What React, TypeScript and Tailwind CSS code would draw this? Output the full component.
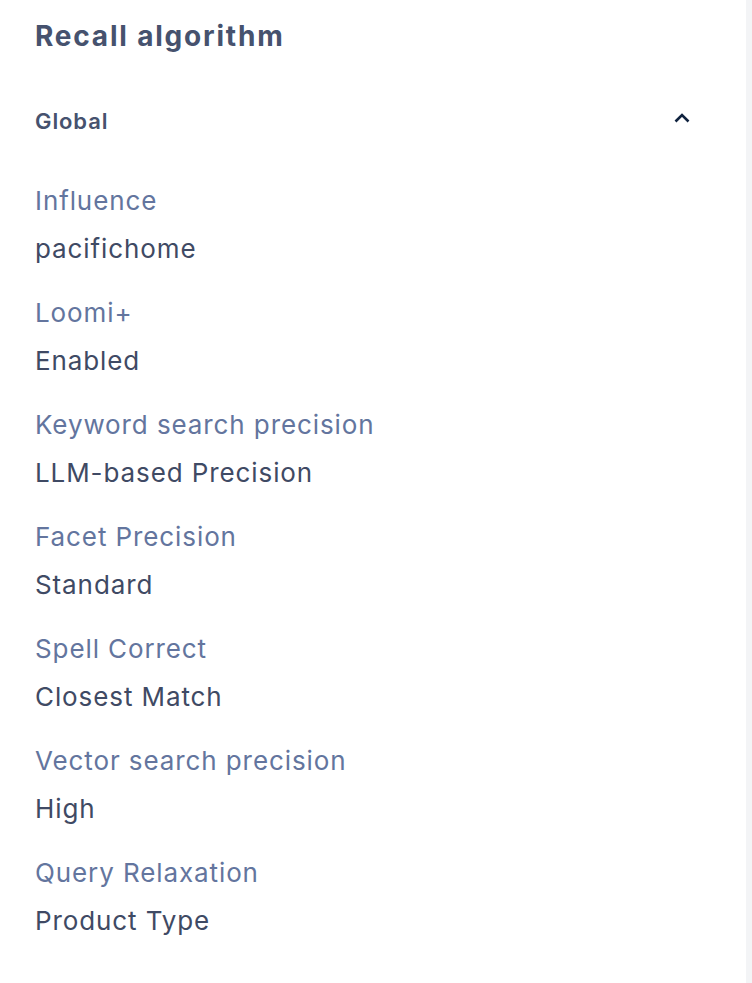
const rows = [
  { label: "Influence", value: "pacifichome" },
  { label: "Loomi+", value: "Enabled" },
  { label: "Keyword search precision", value: "LLM-based Precision" },
  { label: "Facet Precision", value: "Standard" },
  { label: "Spell Correct", value: "Closest Match" },
  { label: "Vector search precision", value: "High" },
  { label: "Query Relaxation", value: "Product Type" },
];

export default function App() {
  return (
    <div className="flex min-h-[983px] w-[752px] font-['Inter',sans-serif]">
      <div className="w-[746px] bg-white pl-[35px] pr-[55px] pt-[18px]">
        <h1 className="text-[28px] leading-[36px] font-bold tracking-[1.8px] text-[#46526e]">Recall algorithm</h1>

        <div className="mt-[53px] flex items-center justify-between">
          <h2 className="text-[22px] leading-[28px] font-semibold tracking-[0.9px] text-[#46526e]">Global</h2>
          <svg width="18" height="12" viewBox="0 0 18 12" fill="none" className="mt-[-6px]">
            <path d="M2.5 9.5 L9 3 L15.5 9.5" stroke="#10233f" strokeWidth="2.6" />
          </svg>
        </div>

        <dl className="mt-[50px] flex flex-col gap-[32px]">
          {rows.map((r) => (
            <div key={r.label} className="flex flex-col gap-[16px]">
              <dt className="text-[26px] leading-[32px] tracking-[0.9px] text-[#63759e]">{r.label}</dt>
              <dd className="text-[26px] leading-[32px] tracking-[0.9px] text-[#3f4a64]">{r.value}</dd>
            </div>
          ))}
        </dl>
      </div>
      <div className="flex-1 bg-[#f3f4f6]" />
    </div>
  );
}
